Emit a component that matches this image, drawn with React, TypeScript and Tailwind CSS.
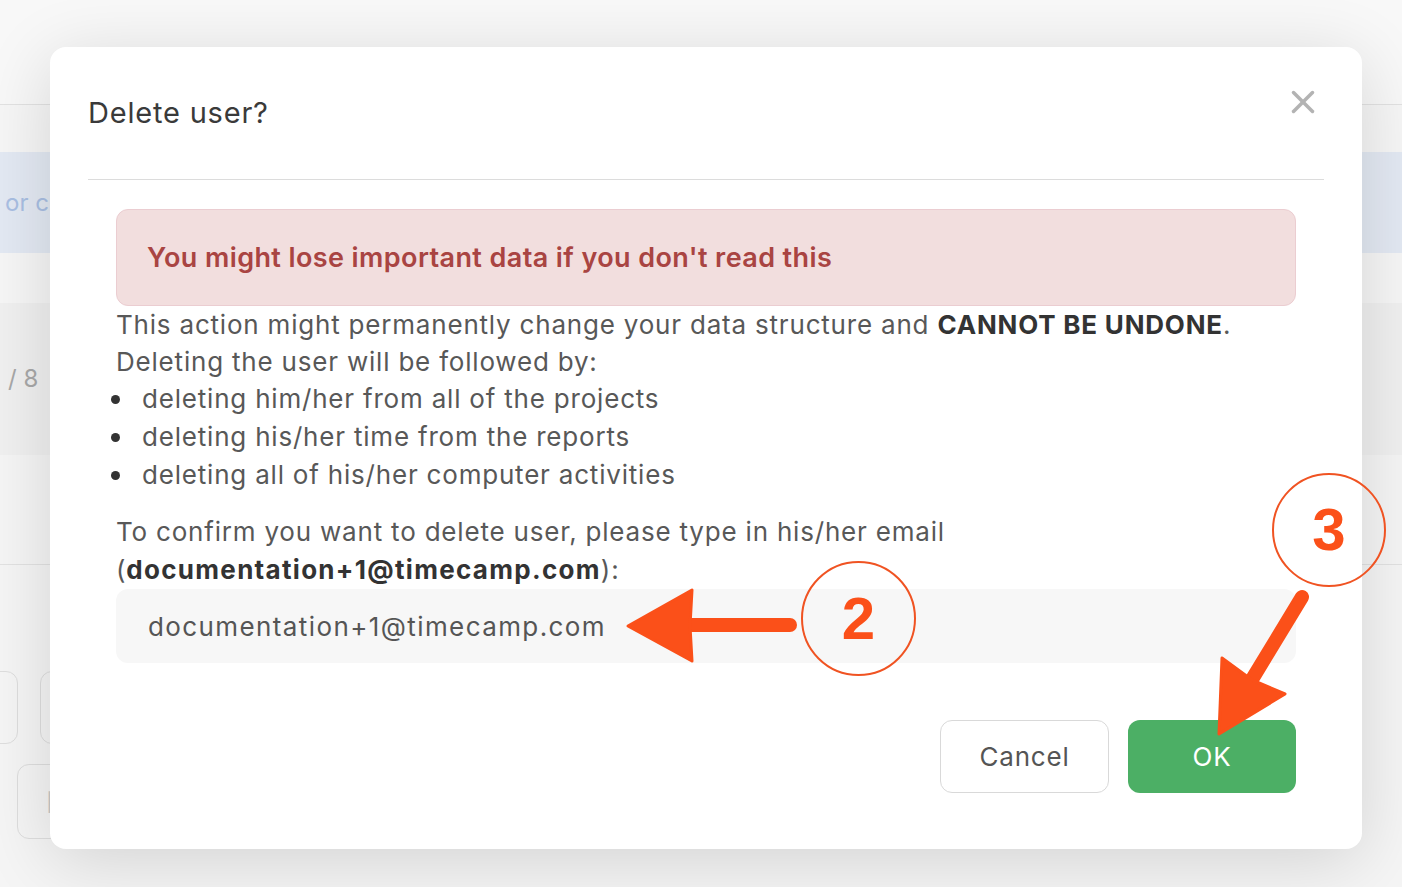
import { X } from "lucide-react"

// ─── background page (dimmed, behind the dialog) ─────────────────────────────

function BackgroundPage() {
  return (
    <div className="flex h-[887px] w-[1402px] flex-col bg-[#f7f7f7] text-[24px]">
      <div className="h-[105px] border-b border-[#e2e2e2] bg-[#f8f8f8]" />
      <div className="h-[47px] bg-[#f6f6f6]" />
      <div className="flex h-[101px] items-center bg-[#e3e9f3] pl-[5px] text-[#a9bfe3]">or c</div>
      <div className="h-[50px] bg-[#f6f6f6]" />
      <div className="flex h-[152px] items-center bg-[#f0f0f0] pl-[8px] text-[#a8a8a8]">/ 8</div>
      <div className="h-[110px] border-b border-[#e2e2e2] bg-[#f5f5f5]" />
      <div className="flex flex-1 flex-col gap-[20px] bg-[#f5f5f5] pt-[106px]">
        <div className="flex gap-[22px]">
          <div className="-ml-[30px] h-[73px] w-[48px] rounded-[12px] border border-[#dedede]" />
          <div className="h-[73px] w-[60px] rounded-[12px] border border-[#dedede]" />
        </div>
        <div className="ml-[17px] flex h-[75px] w-[80px] items-center rounded-[12px] border border-[#dedede] pl-[28px] text-[#c9c9c9]">
          [
        </div>
      </div>
    </div>
  )
}

// ─── annotation arrows ───────────────────────────────────────────────────────

function Annotations() {
  const orange = "#fb5019"
  return (
    <>
      <svg className="pointer-events-none absolute left-0 top-0" width="1402" height="887">
        {/* arrow to input */}
        <line x1="790" y1="625" x2="686" y2="625" stroke={orange} strokeWidth="14" strokeLinecap="round" />
        <polygon points="628,626 692,590 690,626 692,661" fill={orange} stroke={orange} strokeWidth="3" strokeLinejoin="round" />
        {/* arrow to OK */}
        <line x1="1302" y1="597" x2="1248" y2="686" stroke={orange} strokeWidth="14" strokeLinecap="round" />
        <polygon points="1219,734 1222,658 1252,680 1285,694" fill={orange} stroke={orange} strokeWidth="3" strokeLinejoin="round" />
      </svg>
      <div className="absolute left-[801px] top-[561px] flex h-[115px] w-[115px] items-center justify-center rounded-full border-2 border-[#f05322] font-['Liberation_Sans',sans-serif] text-[60px] font-bold text-[#fb5019]">
        2
      </div>
      <div className="absolute left-[1272px] top-[473px] flex h-[114px] w-[114px] items-center justify-center rounded-full border-2 border-[#f05322] font-['Liberation_Sans',sans-serif] text-[60px] font-bold text-[#fb5019]">
        3
      </div>
    </>
  )
}

// ─── dialog ──────────────────────────────────────────────────────────────────

const consequences = [
  "deleting him/her from all of the projects",
  "deleting his/her time from the reports",
  "deleting all of his/her computer activities",
]

function DeleteUserDialog() {
  return (
    <div className="absolute left-[50px] top-[47px] flex w-[1312px] flex-col rounded-[16px] bg-white px-[38px] pb-[56px] shadow-[0_12px_70px_rgba(0,0,0,0.14)]">
      {/* Header */}
      <div className="relative flex h-[133px] items-center border-b border-[#dcdcdc]">
        <h1 className="text-[29px] tracking-[0.8px] text-[#3a3a3a]">Delete user?</h1>
        <button className="absolute right-[2px] top-[36px] text-[#b3b3b3]">
          <X className="h-[38px] w-[38px]" strokeWidth={2.2} />
        </button>
      </div>

      {/* Body */}
      <div className="px-[28px] pt-[29px] text-[26px] leading-[37px] tracking-[0.8px] text-[#585858]">
        <div className="flex h-[97px] items-center rounded-[12px] border border-[#ebcdd1] bg-[#f2dede] px-[30px] text-[27px] font-semibold tracking-[0.4px] text-[#a94442]">
          You might lose important data if you don&apos;t read this
        </div>

        <p>
          This action might permanently change your data structure and{" "}
          <b className="font-bold text-[#333]">CANNOT BE UNDONE</b>.
        </p>
        <p>Deleting the user will be followed by:</p>
        <ul className="leading-[38px]">
          {consequences.map((c) => (
            <li key={c} className="flex items-center">
              <span className="-ml-[5px] mr-[22px] h-[9px] w-[9px] rounded-full bg-[#333]" />
              {c}
            </li>
          ))}
        </ul>

        <p className="mt-[19px] leading-[38px]">
          To confirm you want to delete user, please type in his/her email
          <br />(<b className="font-bold tracking-[1.3px] text-[#333]">documentation+1@timecamp.com</b>):
        </p>

        <div className="flex h-[74px] items-center rounded-[12px] bg-[#f7f7f7] px-[32px] tracking-[1.4px] text-[#555]">
          documentation+1@timecamp.com
        </div>

        {/* Footer */}
        <div className="mt-[57px] flex justify-end gap-[19px]">
          <button className="h-[73px] w-[169px] rounded-[12px] border border-[#d9d9d9] bg-white text-[26px] text-[#555]">
            Cancel
          </button>
          <button className="h-[73px] w-[168px] rounded-[12px] bg-[#4caf65] text-[26px] text-white">
            OK
          </button>
        </div>
      </div>
    </div>
  )
}

export default function App() {
  return (
    <div className="relative h-[887px] w-[1402px] overflow-hidden font-['Inter',sans-serif]">
      <BackgroundPage />
      <DeleteUserDialog />
      <Annotations />
    </div>
  )
}
